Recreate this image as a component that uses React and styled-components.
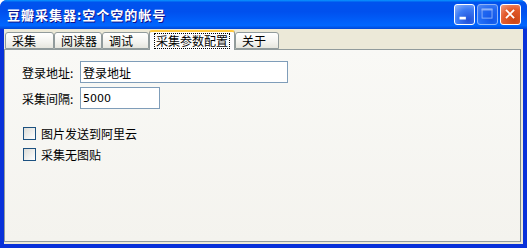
import styled, { createGlobalStyle } from "styled-components";

const Global = createGlobalStyle`
  html, body { margin: 0; padding: 0; background: #fff; }
  #root { width: 527px; height: 248px; }
`;

const Window = styled.div`
  width: 527px;
  height: 248px;
  display: flex;
  flex-direction: column;
  font-family: "Noto Sans CJK SC", "Liberation Sans", sans-serif;
  font-size: 12px;
  color: #000;
  box-sizing: border-box;
  border-radius: 7px 7px 0 0;
  overflow: hidden;
  background: #0831d9;
`;

const TitleBar = styled.div`
  height: 29px;
  flex: none;
  display: flex;
  align-items: center;
  padding: 0 6px 0 7px;
  background: linear-gradient(
    to bottom,
    #0997ff 0%,
    #0053ee 8%,
    #0050ee 40%,
    #0066ff 88%,
    #0047d6 100%
  );
`;

const Title = styled.div`
  flex: 1;
  color: #fff;
  font-weight: bold;
  font-size: 13px;
  letter-spacing: 1px;
  text-shadow: 1px 1px 0 #0f1089;
`;

const Buttons = styled.div`
  display: flex;
  gap: 2px;
`;

const CapButton = styled.div`
  width: 21px;
  height: 21px;
  box-sizing: border-box;
  border: 1px solid #fff;
  border-radius: 3px;
  display: flex;
  align-items: center;
  justify-content: center;
  background: ${(p) =>
    p.$close
      ? "radial-gradient(circle at 70% 80%, #cc4616 0%, #e35b2c 55%, #f0a085 100%)"
      : "radial-gradient(circle at 70% 80%, #2150d8 0%, #3c7bf5 55%, #98b9f9 100%)"};
  opacity: ${(p) => (p.$disabled ? 0.55 : 1)};
`;

const Frame = styled.div`
  flex: 1;
  display: flex;
  flex-direction: column;
  margin: 0 4px 4px 4px;
  background: #ece9d8;
  padding: 1px 2px 2px 0;
`;

const TabStrip = styled.div`
  display: flex;
  align-items: flex-end;
  height: 19px;
  padding-left: 1px;
  position: relative;
  z-index: 1;
`;

const Tab = styled.div`
  box-sizing: border-box;
  width: ${(p) => p.$w}px;
  height: ${(p) => (p.$active ? 20 : 17)}px;
  margin-bottom: ${(p) => (p.$active ? -1 : 0)}px;
  border: 1px solid #919b9c;
  border-bottom: ${(p) => (p.$active ? "none" : "1px solid #919b9c")};
  border-top: ${(p) => (p.$active ? "2px solid #ffc83c" : "1px solid #919b9c")};
  border-radius: 3px 3px 0 0;
  background: ${(p) =>
    p.$active ? "#fcfcfe" : "linear-gradient(to bottom, #ffffff, #f3f3ef 60%, #e6e6de)"};
  padding-left: ${(p) => (p.$active ? 5 : 6)}px;
  display: flex;
  align-items: center;
  line-height: 14px;
  white-space: nowrap;
`;

const Focus = styled.span`
  outline: 1px dotted #000;
  padding: 0 1px;
`;

const Panel = styled.div`
  flex: 1;
  box-sizing: border-box;
  border: 1px solid #919b9c;
  border-right-color: #7f8c8d;
  background: linear-gradient(to bottom, #f9f9f6, #f4f3ee);
  padding: 11px 0 0 17px;
  display: flex;
  flex-direction: column;
`;

const Row = styled.div`
  display: flex;
  align-items: center;
  height: 22px;
  margin-bottom: ${(p) => p.$mb || 0}px;
`;

const Label = styled.div`
  width: 58px;
  white-space: nowrap;
`;

const Input = styled.div`
  box-sizing: border-box;
  width: ${(p) => p.$w}px;
  height: 22px;
  border: 1px solid #7f9db9;
  background: #fff;
  padding-left: 2px;
  display: flex;
  align-items: center;
  font-family: ${(p) => (p.$latin ? "Tahoma, 'DejaVu Sans', sans-serif" : "inherit")};
  font-size: ${(p) => (p.$latin ? 11 : 12)}px;
`;

const Check = styled.div`
  display: flex;
  align-items: center;
  gap: 5px;
  height: 21px;
  padding-left: 1px;
`;

const Box = styled.div`
  width: 13px;
  height: 13px;
  box-sizing: border-box;
  border: 1px solid #1c5180;
  background: linear-gradient(135deg, #dcdcd7, #fff);
`;

export default function App() {
  const tabs = [
    { text: "采集", w: 49 },
    { text: "阅读器", w: 48 },
    { text: "调试", w: 47 },
    { text: "采集参数配置", w: 86, active: true },
    { text: "关于", w: 44 },
  ];
  return (
    <>
      <Global />
      <Window>
        <TitleBar>
          <Title>豆瓣采集器:空个空的帐号</Title>
          <Buttons>
            <CapButton>
              <svg width="21" height="21" viewBox="0 0 21 21">
                <rect x="5" y="13" width="7" height="3" fill="#fff" />
              </svg>
            </CapButton>
            <CapButton $disabled>
              <svg width="21" height="21" viewBox="0 0 21 21">
                <rect x="4.5" y="4.5" width="11" height="10" fill="none" stroke="#fff" />
                <rect x="4" y="4" width="12" height="2" fill="#fff" />
              </svg>
            </CapButton>
            <CapButton $close>
              <svg width="21" height="21" viewBox="0 0 21 21">
                <path d="M5.5 5.5 L14.5 14.5 M14.5 5.5 L5.5 14.5" stroke="#fff" strokeWidth="2" />
              </svg>
            </CapButton>
          </Buttons>
        </TitleBar>
        <Frame>
          <TabStrip>
            {tabs.map((t, i) => (
              <Tab key={i} $w={t.w} $active={t.active}>
                {t.active ? <Focus>{t.text}</Focus> : t.text}
              </Tab>
            ))}
          </TabStrip>
          <Panel>
            <Row $mb={4}>
              <Label>登录地址:</Label>
              <Input $w={208}>登录地址</Input>
            </Row>
            <Row $mb={14}>
              <Label>采集间隔:</Label>
              <Input $w={80} $latin>5000</Input>
            </Row>
            <Check>
              <Box />
              图片发送到阿里云
            </Check>
            <Check>
              <Box />
              采集无图贴
            </Check>
          </Panel>
        </Frame>
      </Window>
    </>
  );
}
